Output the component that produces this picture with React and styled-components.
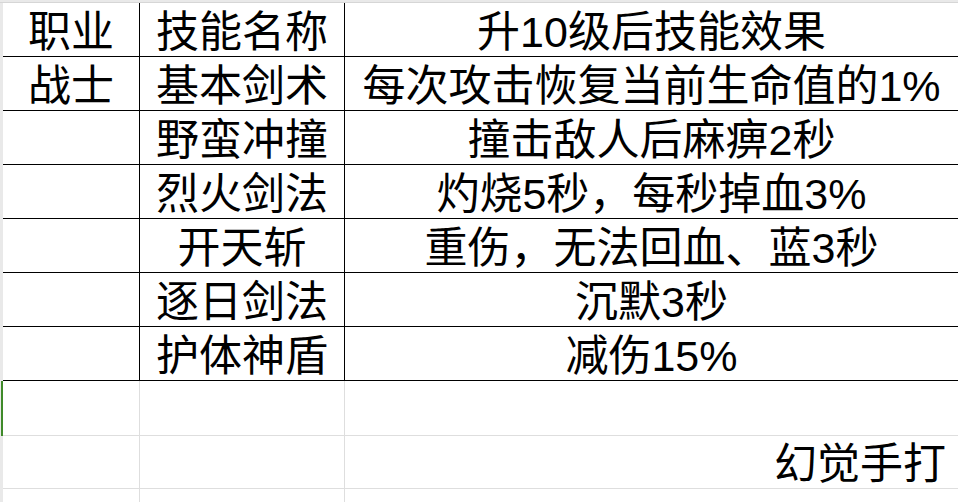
import React from "react";
import styled, { createGlobalStyle } from "styled-components";

const Global = createGlobalStyle`
  html, body { margin: 0; padding: 0; background: #ffffff; }
  body { width: 958px; height: 502px; overflow: hidden; }
`;

const Sheet = styled.div`
  display: grid;
  grid-template-columns: 3px 137px 205px 1fr;
  grid-template-rows: 3px repeat(7, 54px) 55px 53px 40px;
  width: 958px;
  height: 502px;
  overflow: hidden;
  font-family: "Liberation Sans", "Noto Sans CJK SC", sans-serif;
  color: #000;
`;

const TopStrip = styled.div`
  grid-column: 1 / -1;
  background: #e9e9e9;
  border-bottom: 1px solid #d6d6d6;
  box-sizing: border-box;
`;

const Gutter = styled.div`
  background: #e9e9e9;
  box-sizing: border-box;
  border-right: 2px solid ${(p) => (p.$active ? "#3f8a2a" : "#e9e9e9")};
`;

const Cell = styled.div`
  box-sizing: border-box;
  display: flex;
  align-items: flex-end;
  justify-content: ${(p) => (p.$align === "right" ? "flex-end" : "center")};
  padding: 0 ${(p) => (p.$align === "right" ? "12px" : "0")} 0 0;
  font-size: 43px;
  line-height: 1.1;
  white-space: nowrap;
  overflow: hidden;
  border-bottom: 1px solid ${(p) => (p.$dark ? "#000" : "#dedede")};
  border-right: ${(p) =>
    p.$last ? "none" : `1px solid ${p.$dark ? "#000" : "#dedede"}`};
`;

const rows = [
  ["职业", "技能名称", "升10级后技能效果"],
  ["战士", "基本剑术", "每次攻击恢复当前生命值的1%"],
  ["", "野蛮冲撞", "撞击敌人后麻痹2秒"],
  ["", "烈火剑法", "灼烧5秒，每秒掉血3%"],
  ["", "开天斩", "重伤，无法回血、蓝3秒"],
  ["", "逐日剑法", "沉默3秒"],
  ["", "护体神盾", "减伤15%"],
];

const extra = [
  { active: true, cells: ["", "", ""] },
  { active: false, cells: ["", "", "幻觉手打"], align: "right" },
  { active: false, cells: ["", "", ""] },
];

export default function App() {
  return (
    <>
      <Global />
      <Sheet>
        <TopStrip />
        {rows.map((r, i) => (
          <React.Fragment key={i}>
            <Gutter />
            <Cell $dark>{r[0]}</Cell>
            <Cell $dark>{r[1]}</Cell>
            <Cell $dark $last>{r[2]}</Cell>
          </React.Fragment>
        ))}
        {extra.map((r, i) => (
          <React.Fragment key={"e" + i}>
            <Gutter $active={r.active} />
            <Cell>{r.cells[0]}</Cell>
            <Cell>{r.cells[1]}</Cell>
            <Cell $last $align={r.align}>{r.cells[2]}</Cell>
          </React.Fragment>
        ))}
      </Sheet>
    </>
  );
}
